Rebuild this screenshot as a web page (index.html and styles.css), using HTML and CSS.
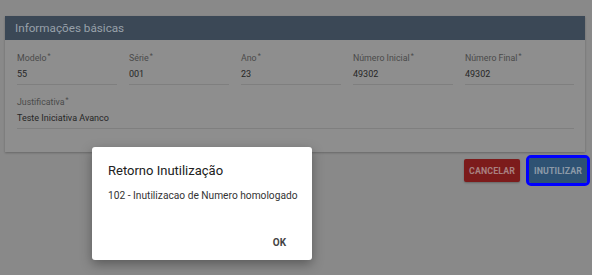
FILE: index.html
```html
<!DOCTYPE html>
<html lang="pt-BR">
<head>
<meta charset="utf-8">
<link rel="stylesheet" href="styles.css">
</head>
<body>
<div class="page">
  <section class="card">
    <header class="card-header">Informações básicas</header>
    <div class="card-body">
      <div class="row row-5">
        <div class="field"><span class="label">Modelo<sup>*</sup></span><span class="value">55</span></div>
        <div class="field"><span class="label">Série<sup>*</sup></span><span class="value">001</span></div>
        <div class="field"><span class="label">Ano<sup>*</sup></span><span class="value">23</span></div>
        <div class="field"><span class="label">Número Inicial<sup>*</sup></span><span class="value">49302</span></div>
        <div class="field"><span class="label">Número Final<sup>*</sup></span><span class="value">49302</span></div>
      </div>
      <div class="row">
        <div class="field"><span class="label">Justificativa<sup>*</sup></span><span class="value">Teste Iniciativa Avanco</span></div>
      </div>
    </div>
  </section>
  <div class="actions">
    <button class="btn btn-cancel">CANCELAR</button>
    <button class="btn btn-primary">INUTILIZAR</button>
  </div>
</div>
<div class="dialog">
  <h2 class="dialog-title">Retorno Inutilização</h2>
  <p class="dialog-text">102 - Inutilizacao de Numero homologado</p>
  <div class="dialog-actions"><button class="dialog-ok">OK</button></div>
</div>
</body>
</html>
```
FILE: styles.css
```css
html, body {
  margin: 0;
  padding: 0;
}
body {
  background: #898989;
  font-family: Roboto, "Liberation Sans", sans-serif;
  width: 592px;
  height: 275px;
  overflow: hidden;
  position: relative;
}
.page {
  padding: 16px 2px 0 5px;
}
.card {
  width: 580px;
  background: #8e8e8e;
  box-shadow: 0 1px 2px rgba(0,0,0,0.25);
}
.card-header {
  height: 24px;
  line-height: 24px;
  background: #3b4856;
  color: #98a1aa;
  font-size: 11.7px;
  padding-left: 10px;
}
.card-body {
  padding: 13px 11px 23px 12px;
  display: flex;
  flex-direction: column;
  gap: 12px;
}
.row {
  display: flex;
}
.row-5 {
  display: grid;
  grid-template-columns: 100px 100px 100px 100px 1fr;
  column-gap: 12px;
}
.field {
  display: flex;
  flex-direction: column;
  border-bottom: 1px solid #7f7f7f;
  flex: 1;
  padding-bottom: 4px;
}
.label {
  font-size: 8.8px;
  color: #4a4a4a;
  line-height: 11px;
}
.label sup {
  font-size: 7px;
  vertical-align: 3px;
  line-height: 0;
  margin-left: 1px;
}
.value {
  font-size: 9px;
  color: #262626;
  line-height: 12px;
  margin-top: 4px;
}
.actions {
  display: flex;
  justify-content: flex-end;
  align-items: center;
  gap: 9px;
  margin-top: 6px;
  padding-right: 0;
}
.btn {
  font-family: Roboto, "Liberation Sans", sans-serif;
  font-weight: 700;
  font-size: 8.8px;
  border: none;
  border-radius: 2px;
  height: 23px;
  padding: 0;
  letter-spacing: 0.1px;
}
.btn-cancel {
  background: #7c1b1b;
  color: #a98080;
  width: 56px;
  box-shadow: 0 1px 2px rgba(0,0,0,0.25);
}
.btn-primary {
  background: #2e5273;
  color: #8c9aa8;
  width: 58px;
  height: 25px;
  outline: 3px solid #0000ff;
  outline-offset: 0;
  margin-right: 3px;
}
.dialog {
  position: absolute;
  left: 92px;
  top: 147px;
  width: 220px;
  height: 113px;
  background: #ffffff;
  border-radius: 3px;
  box-shadow: 0 4px 12px rgba(0,0,0,0.35);
  box-sizing: border-box;
  padding: 15px 12px 0 16px;
  display: flex;
  flex-direction: column;
}
.dialog-title {
  margin: 0;
  font-size: 13px;
  font-weight: 400;
  color: #212121;
  line-height: 17px;
}
.dialog-text {
  margin: 10px 0 0 0;
  font-size: 10.2px;
  color: #333333;
  line-height: 14px;
  white-space: nowrap;
}
.dialog-actions {
  margin-top: auto;
  display: flex;
  justify-content: flex-end;
  padding-bottom: 10px;
  padding-right: 6px;
}
.dialog-ok {
  background: none;
  border: none;
  font-family: Roboto, "Liberation Sans", sans-serif;
  font-weight: 700;
  font-size: 10px;
  color: #444444;
  padding: 0 8px;
  height: 16px;
}
```
